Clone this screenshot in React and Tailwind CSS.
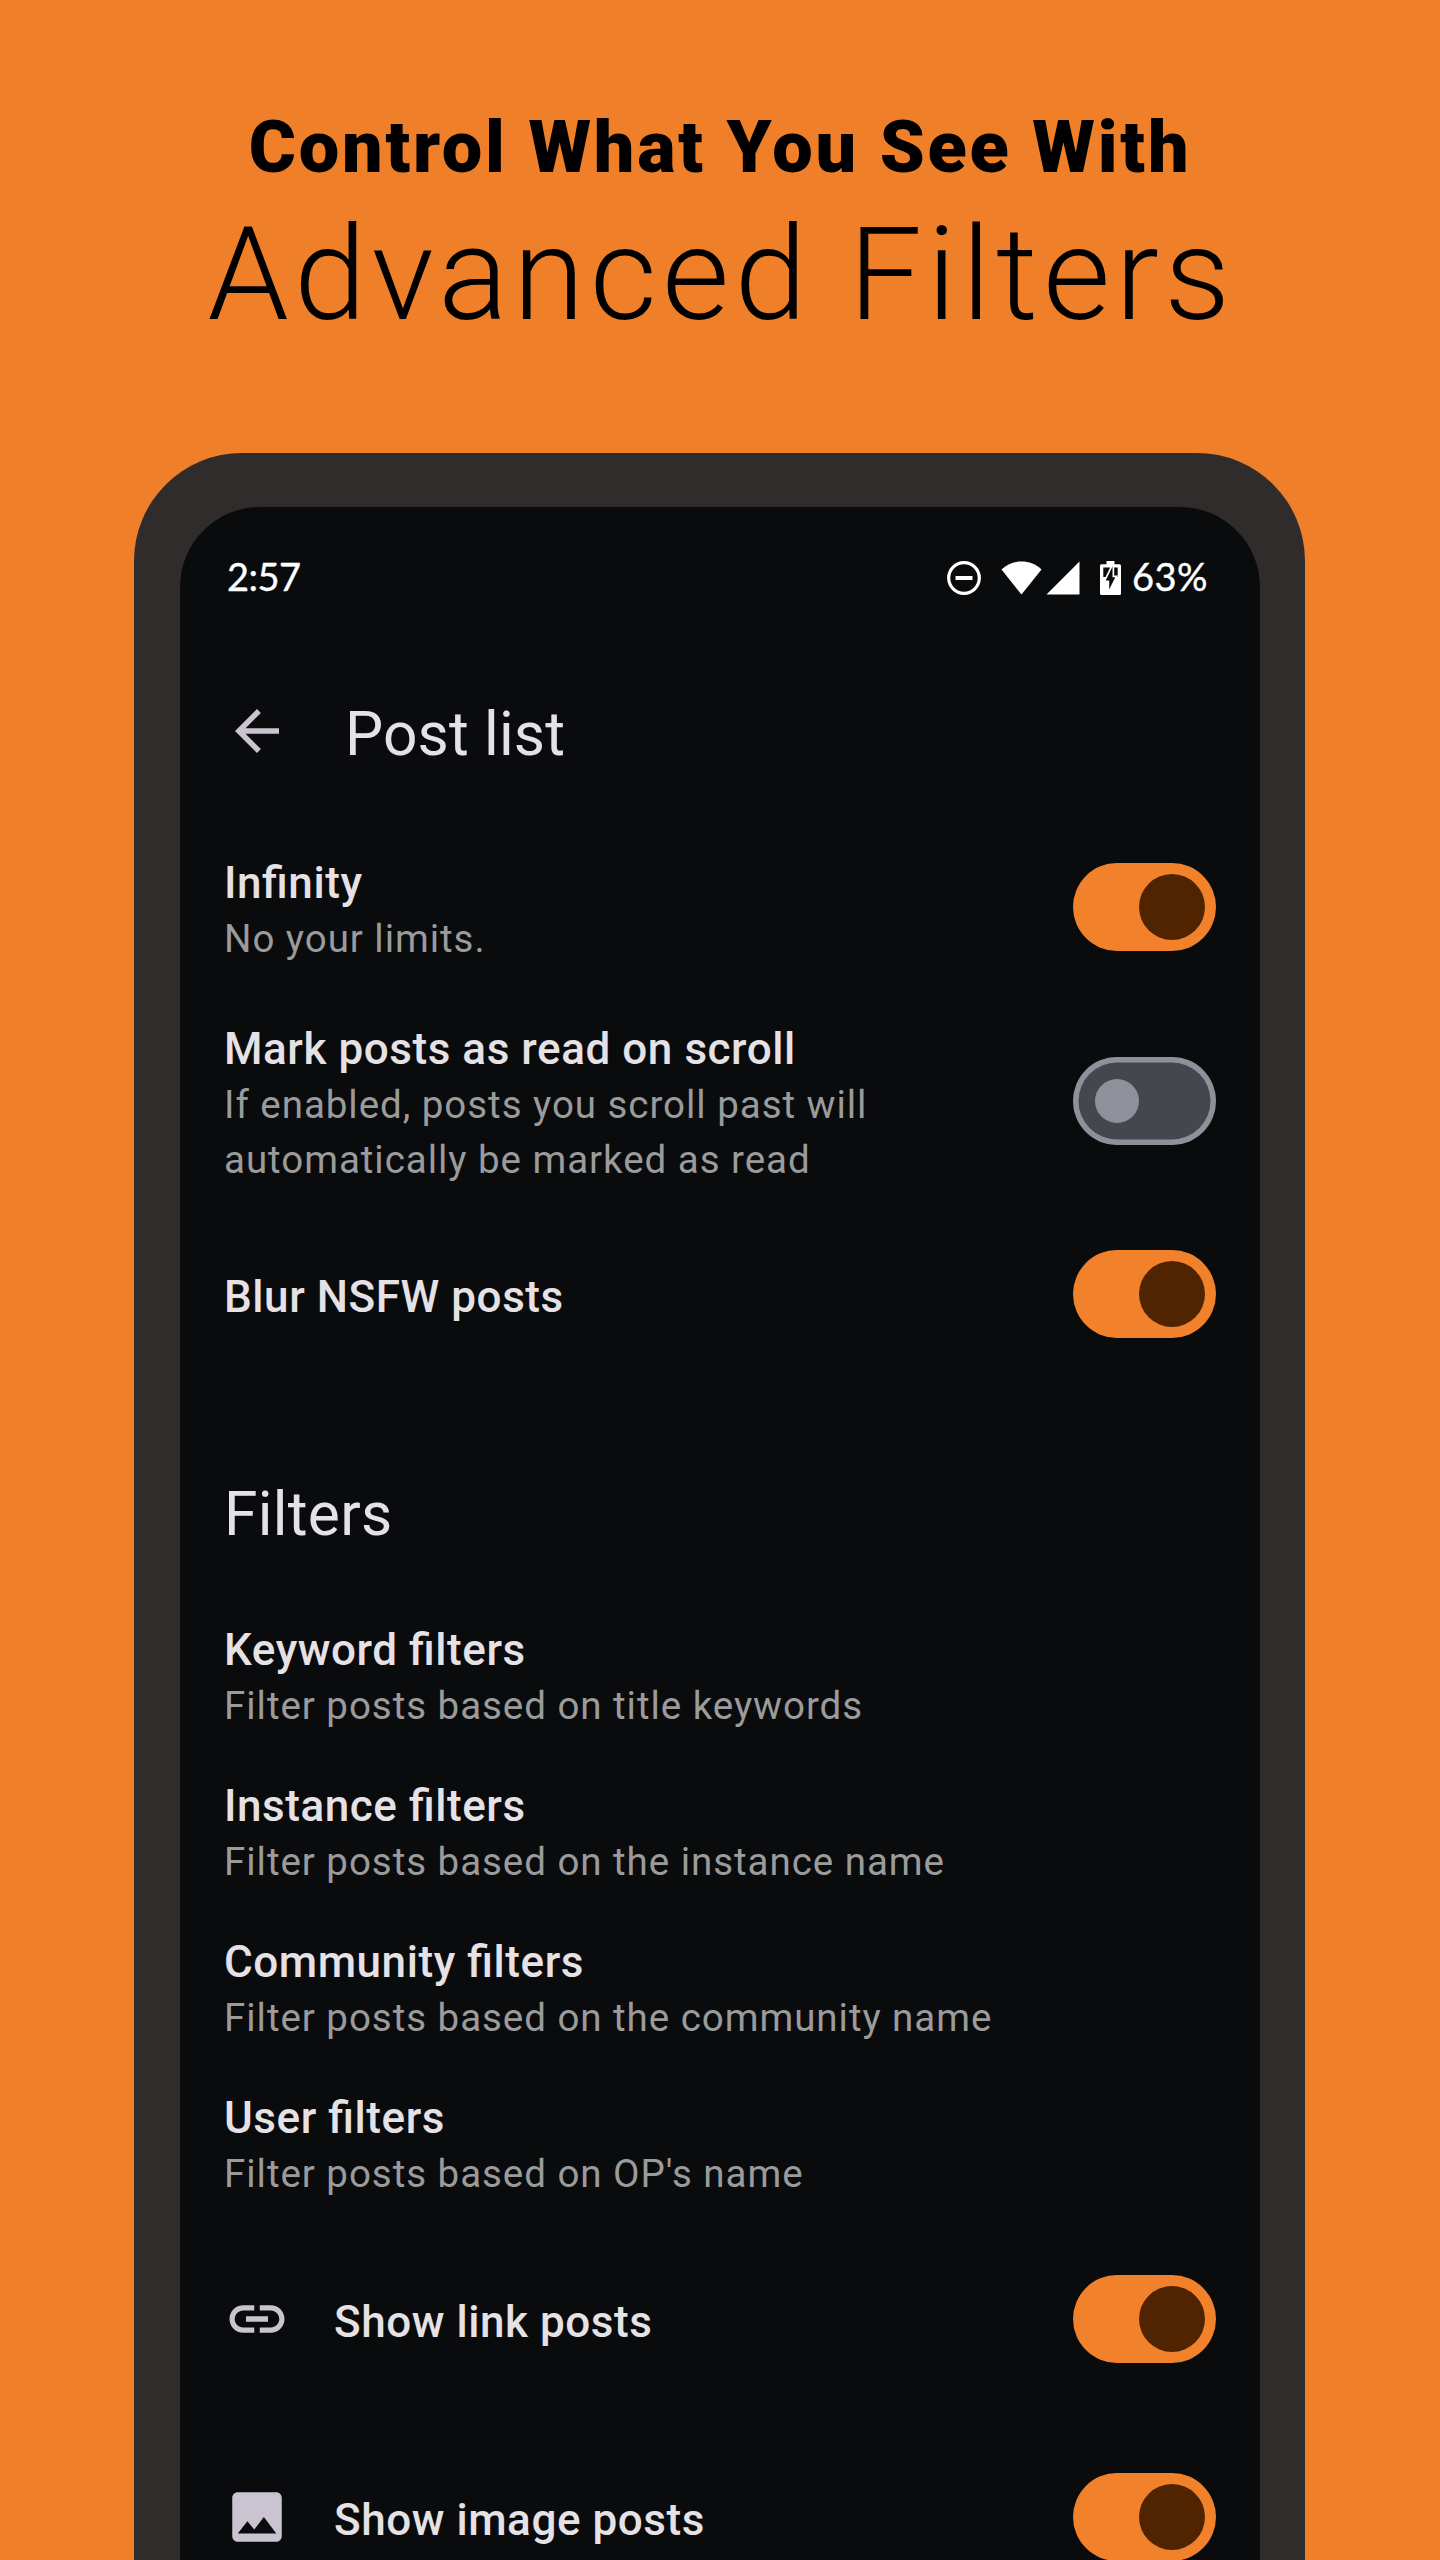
import React from "react";
import { MdArrowBack, MdImage, MdLink } from "react-icons/md";

function Switch({ on }) {
  return on ? (
    <div className="flex h-[88px] w-[143px] shrink-0 items-center justify-end rounded-full bg-[#f2812b] pr-[11px]">
      <div className="size-[66px] rounded-full bg-[#502400]" />
    </div>
  ) : (
    <div className="flex h-[88px] w-[143px] shrink-0 items-center rounded-full bg-[#46464f] pl-[22px] inset-ring-[5.5px] inset-ring-[#90909a]">
      <div className="size-[44px] rounded-full bg-[#90909a]" />
    </div>
  );
}

function Label({ title, children }) {
  return (
    <div className="pt-1.5">
      <div className="text-[44px] leading-[56px] font-medium tracking-[0.56px] text-[#e6e1e5] [font-feature-settings:'liga'_1]">
        {title}
      </div>
      {children && (
        <div className="text-[38.5px] leading-[55px] tracking-[0.96px] text-[#9b9b9b]">{children}</div>
      )}
    </div>
  );
}

function StatusIcons() {
  return (
    <div className="flex items-center">
      <svg className="size-[34px]" viewBox="0 0 34 34" fill="none" stroke="#fff">
        <circle cx="17" cy="17" r="15.3" strokeWidth="3.2" />
        <path d="M8.5 17h17" strokeWidth="4" />
      </svg>
      <svg className="ml-5 h-[34px] w-[41px]" viewBox="0 0 41 34" fill="#fff">
        <path d="M.5 8.5C6 3 13 .5 20.500.5S35 3 40.500 8.500L20.500 33.500Z" />
      </svg>
      <svg className="ml-1 h-[34px] w-[34px]" viewBox="0 0 34 34" fill="#fff">
        <path d="M33.500.5V33.500H.5Z" />
      </svg>
      <svg className="ml-5 h-[34px] w-[21px]" viewBox="0 0 21 34">
        <path
          fill="#fff"
          d="M6.500 0h8v3.300H19.500a1.500 1.500 0 0 1 1.500 1.500V32.500a1.500 1.500 0 0 1-1.500 1.500H1.500A1.500 1.500 0 0 1 0 32.500V4.800a1.500 1.500 0 0 1 1.500-1.500H6.500Z"
        />
        <path fill="#090b0d" d="M3.300 6.500h14.400v9.500H3.300Z" />
        <path
          fill="#090b0d"
          stroke="#fff"
          strokeWidth="3.400"
          paintOrder="stroke"
          d="M12.500 5.500 5.700 19.500H9.200V28.500L15.300 16.300H12.500Z"
        />
      </svg>
      <span className="ml-[11px] pb-1 font-[Lato] text-[38px] leading-[44px] tracking-[0.5px] text-white [-webkit-text-stroke:0.4px_white]">
        63%
      </span>
    </div>
  );
}

const filters = [
  ["Keyword filters", "Filter posts based on title keywords"],
  ["Instance filters", "Filter posts based on the instance name"],
  ["Community filters", "Filter posts based on the community name"],
  ["User filters", "Filter posts based on OP's name"],
];

export default function App() {
  return (
    <div className="flex h-[2560px] w-[1440px] flex-col overflow-hidden bg-[#ef8029] font-[Roboto,sans-serif]">
      <header className="h-[453px] shrink-0 pt-[108px] text-center text-black">
        <div className="text-[72px] leading-[80px] font-black tracking-[2.8px]">
          Control What You See With
        </div>
        <h1 className="mt-[12px] pl-[3px] text-[130px] leading-[150px] font-light tracking-[5.2px]">
          Advanced Filters
        </h1>
      </header>

      <div className="ml-[134px] flex w-[1171px] flex-1 flex-col rounded-t-[108px] bg-[#302c2b] pt-[54px] pr-[45px] pl-[46px]">
        <main className="h-[2053px] shrink-0 overflow-hidden rounded-t-[80px] bg-[#090b0d] px-11 pt-[38px]">
          <div className="flex h-[66px] items-center justify-between pr-[8px] pl-[3px]">
            <span className="pb-1 font-[Lato] text-[38px] leading-[44px] tracking-[-0.5px] text-white [-webkit-text-stroke:0.4px_white]">
              2:57
            </span>
            <StatusIcons />
          </div>

          <div className="mt-[87px] flex h-[66px] items-center">
            <MdArrowBack className="size-[66px] text-[#cac4d0]" />
            <h2 className="pt-2 pl-[55px] text-[60.5px] leading-[66px] tracking-[0.15px] text-[#e6e1e5]">
              Post list
            </h2>
          </div>

          <div className="mt-[55px] flex h-[176px] items-center justify-between">
            <Label title="Infinity">No your limits.</Label>
            <Switch on />
          </div>
          <div className="flex h-[212px] items-center justify-between">
            <Label title="Mark posts as read on scroll">
              If enabled, posts you scroll past will
              <br />
              automatically be marked as read
            </Label>
            <Switch />
          </div>
          <div className="flex h-[174px] items-center justify-between">
            <Label title="Blur NSFW posts" />
            <Switch on />
          </div>

          <h2 className="h-[218px] pt-[94px] text-[60.5px] leading-[80px] tracking-[0.3px] text-[#e6e1e5]">
            Filters
          </h2>

          {filters.map(([title, text]) => (
            <div key={title} className="h-[156px] pt-[17px]">
              <Label title={title}>{text}</Label>
            </div>
          ))}

          <div className="flex h-[192px] items-center">
            <MdLink className="mr-11 size-[66px] text-[#cac4d0]" />
            <Label title="Show link posts" />
            <div className="ml-auto">
              <Switch on />
            </div>
          </div>
          <div className="flex h-[204px] items-center">
            <MdImage className="mr-11 size-[66px] text-[#cac4d0]" />
            <Label title="Show image posts" />
            <div className="ml-auto">
              <Switch on />
            </div>
          </div>
        </main>
      </div>
    </div>
  );
}
